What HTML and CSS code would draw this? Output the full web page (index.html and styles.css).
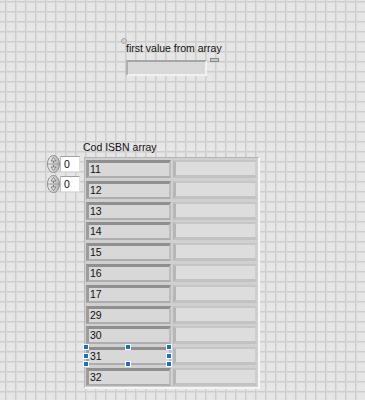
FILE: index.html
```html
<!DOCTYPE html>
<html lang="en">
<head>
  <meta charset="UTF-8" />
  <title>Front Panel</title>
  <link rel="stylesheet" href="styles.css">
</head>
<body>

  <div class="panel">

    <div class="indicator">
      <span class="pin"></span>
      <div class="label">first value from array</div>
      <div class="ind-row">
        <div class="ind-box"></div>
        <span class="ind-tab"></span>
      </div>
    </div>

    <div class="array">
      <div class="label array-label">Cod ISBN array</div>
      <div class="array-body">
        <div class="indexes">
          <div class="index">
            <svg class="spin" width="13" height="18" viewBox="0 0 13 18">
              <defs>
                <linearGradient id="sg" x1="0" y1="0" x2="1" y2="0">
                  <stop offset="0" stop-color="#f2f2f2"/>
                  <stop offset="1" stop-color="#b4b4b4"/>
                </linearGradient>
              </defs>
              <ellipse cx="6.5" cy="9" rx="6" ry="8.5" fill="url(#sg)" stroke="#8c8c8c"/>
              <path d="M1 9 H12" stroke="#9a9a9a"/>
              <path d="M6.5 2.5 L9 6 H4 Z M6.5 6 V8" fill="#eee" stroke="#707070" stroke-width="0.8"/>
              <path d="M6.5 15.5 L9 12 H4 Z M6.5 12 V10" fill="#eee" stroke="#707070" stroke-width="0.8"/>
            </svg>
            <div class="index-val">0</div>
          </div>
          <div class="index">
            <svg class="spin" width="13" height="18" viewBox="0 0 13 18">
              <ellipse cx="6.5" cy="9" rx="6" ry="8.5" fill="url(#sg)" stroke="#8c8c8c"/>
              <path d="M1 9 H12" stroke="#9a9a9a"/>
              <path d="M6.5 2.5 L9 6 H4 Z M6.5 6 V8" fill="#eee" stroke="#707070" stroke-width="0.8"/>
              <path d="M6.5 15.5 L9 12 H4 Z M6.5 12 V10" fill="#eee" stroke="#707070" stroke-width="0.8"/>
            </svg>
            <div class="index-val">0</div>
          </div>
        </div>

        <div class="frame">
          <div class="cell">11</div><div class="cell blank"></div>
          <div class="cell">12</div><div class="cell blank"></div>
          <div class="cell">13</div><div class="cell blank"></div>
          <div class="cell">14</div><div class="cell blank"></div>
          <div class="cell">15</div><div class="cell blank"></div>
          <div class="cell">16</div><div class="cell blank"></div>
          <div class="cell">17</div><div class="cell blank"></div>
          <div class="cell">29</div><div class="cell blank"></div>
          <div class="cell">30</div><div class="cell blank"></div>
          <div class="cell selected">31
            <span class="handle h-tl"></span>
            <span class="handle h-tc"></span>
            <span class="handle h-tr"></span>
            <span class="handle h-ml"></span>
            <span class="handle h-mr"></span>
            <span class="handle h-bl"></span>
            <span class="handle h-bc"></span>
            <span class="handle h-br"></span>
          </div><div class="cell blank"></div>
          <div class="cell">32</div><div class="cell blank"></div>
        </div>
      </div>
    </div>

  </div>

</body>
</html>
```

FILE: styles.css
```css
body {
  margin: 0;
  font-family: 'Liberation Sans', Arial, sans-serif;
  color: #111;
}

.panel {
  position: relative;
  width: 365px;
  height: 400px;
  overflow: hidden;
  background-color: #e6e6e6;
  background-image:
    linear-gradient(to right, #cdcdcd 0 1px, #d9d9d9 1px 2px, transparent 2px),
    linear-gradient(to bottom, #cdcdcd 0 1px, #d9d9d9 1px 2px, transparent 2px);
  background-size: 10px 10px;
  background-position: 5px 1px;
}

.label {
  font-size: 10.5px;
  line-height: 12px;
  white-space: nowrap;
}

/* numeric indicator */
.indicator {
  position: absolute;
  left: 121px;
  top: 38px;
  display: flex;
  flex-direction: column;
}

.pin {
  width: 6px;
  height: 6px;
  border-radius: 50%;
  background: #d0d0d0;
  border: 1px solid #a8a8a8;
  box-sizing: border-box;
}

.indicator .label {
  margin-top: -2px;
  margin-left: 5px;
}

.ind-row {
  display: flex;
  align-items: flex-start;
  margin-top: 6px;
  margin-left: 5px;
}

.ind-box {
  width: 81px;
  height: 16px;
  box-sizing: border-box;
  background: #d9d9d9;
  border-top: 2px solid #a6a6a6;
  border-left: 2px solid #b0b0b0;
  border-right: 2px solid #f2f2f2;
  border-bottom: 2px solid #f2f2f2;
}

.ind-tab {
  width: 9px;
  height: 4px;
  margin-left: 3px;
  margin-top: -2px;
  box-sizing: border-box;
  background: #c8c8c8;
  border: 1px solid #8a8a8a;
}

/* array */
.array {
  position: absolute;
  left: 47px;
  top: 141px;
}

.array-label {
  margin-left: 36px;
}

.array-body {
  display: flex;
  align-items: flex-start;
  margin-top: 2px;
}

.indexes {
  display: flex;
  flex-direction: column;
  gap: 2px;
  width: 37px;
}

.index {
  display: flex;
  align-items: center;
  height: 18px;
}

.spin {
  display: block;
}

.index-val {
  width: 20px;
  height: 16px;
  box-sizing: border-box;
  background: #fff;
  border-top: 1px solid #a0a0a0;
  border-left: 1px solid #c0c0c0;
  border-right: 1px solid #e0e0e0;
  border-bottom: 1px solid #e0e0e0;
  font-size: 10.5px;
  line-height: 14px;
  padding-left: 3px;
}

.frame {
  margin-top: 2px;
  display: grid;
  grid-template-columns: 85px 84px;
  grid-auto-rows: 18px;
  column-gap: 2px;
  row-gap: 2.8px;
  padding: 2px 1px 1px 1px;
  background: #d0d0d0;
  border-top: 1px solid #b4b4b4;
  border-left: 1px solid #b8b8b8;
  border-right: 2px solid #f6f6f6;
  border-bottom: 2px solid #f4f4f4;
}

.cell {
  position: relative;
  box-sizing: border-box;
  background: #d8d8d8;
  border-top: 3px solid #8f8f8f;
  border-left: 3px solid #9c9c9c;
  border-right: 2px solid #bdbdbd;
  border-bottom: 2px solid #adadad;
  font-size: 10.5px;
  line-height: 13px;
  padding-left: 1px;
}

.cell.blank {
  background: #dddddd;
  border-top: 2px solid #c6c6c6;
  border-left: 3px solid #b6b6b6;
  border-right: 2px solid #cdcdcd;
  border-bottom: 3px solid #c2c2c2;
}

.handle {
  position: absolute;
  width: 6px;
  height: 6px;
  box-sizing: border-box;
  background: #1570d6;
  border: 1px solid #fff;
}

.h-tl, .h-tc, .h-tr { top: -6px; }
.h-ml, .h-mr { top: 3px; }
.h-bl, .h-bc, .h-br { top: 11px; }
.h-tl, .h-ml, .h-bl { left: -6px; }
.h-tc, .h-bc { left: 36px; }
.h-tr, .h-mr, .h-br { left: 77px; }
```
